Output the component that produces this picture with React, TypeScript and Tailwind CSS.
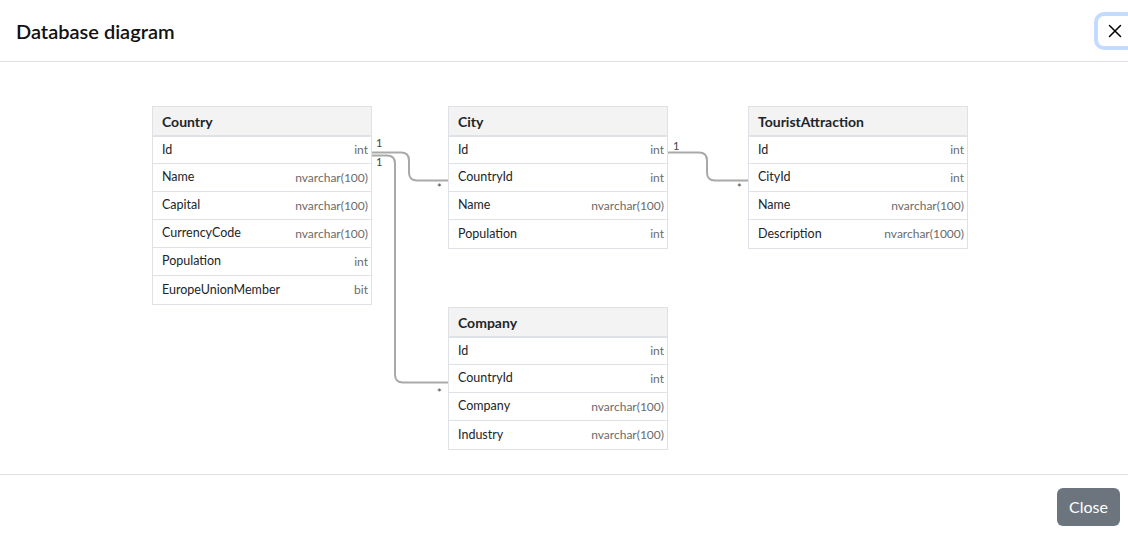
import { X } from 'lucide-react';

type Column = { name: string; type: string };
type Table = { name: string; x: number; y: number; columns: Column[] };

const tables: Table[] = [
  {
    name: 'Country',
    x: 152,
    y: 44,
    columns: [
      { name: 'Id', type: 'int' },
      { name: 'Name', type: 'nvarchar(100)' },
      { name: 'Capital', type: 'nvarchar(100)' },
      { name: 'CurrencyCode', type: 'nvarchar(100)' },
      { name: 'Population', type: 'int' },
      { name: 'EuropeUnionMember', type: 'bit' },
    ],
  },
  {
    name: 'City',
    x: 448,
    y: 44,
    columns: [
      { name: 'Id', type: 'int' },
      { name: 'CountryId', type: 'int' },
      { name: 'Name', type: 'nvarchar(100)' },
      { name: 'Population', type: 'int' },
    ],
  },
  {
    name: 'TouristAttraction',
    x: 748,
    y: 44,
    columns: [
      { name: 'Id', type: 'int' },
      { name: 'CityId', type: 'int' },
      { name: 'Name', type: 'nvarchar(100)' },
      { name: 'Description', type: 'nvarchar(1000)' },
    ],
  },
  {
    name: 'Company',
    x: 448,
    y: 245,
    columns: [
      { name: 'Id', type: 'int' },
      { name: 'CountryId', type: 'int' },
      { name: 'Company', type: 'nvarchar(100)' },
      { name: 'Industry', type: 'nvarchar(100)' },
    ],
  },
];

// relation labels, positions relative to the diagram canvas
const labels = [
  { text: '1', x: 376, y: 75 },
  { text: '1', x: 376, y: 94 },
  { text: '*', x: 437, y: 120 },
  { text: '*', x: 437, y: 325 },
  { text: '1', x: 673, y: 78 },
  { text: '*', x: 737, y: 120 },
];

function TableNode({ table }: { table: Table }) {
  return (
    <div
      className="absolute w-[220px] border border-[#dee2e6] bg-white"
      style={{ left: table.x, top: table.y }}
    >
      <div className="flex h-[30px] items-center border-b-2 border-[#dee2e6] bg-[#f3f3f3] px-[9px] text-[14px] font-bold text-[#212529]">
        {table.name}
      </div>
      <div className="divide-y divide-[#dee2e6]">
        {table.columns.map((c) => (
          <div key={c.name} className="flex h-[28px] items-center justify-between pl-[9px] pr-[3px] first:h-[27px]">
            <span className="text-[12.5px] text-[#212529]">{c.name}</span>
            <span className="text-[12px] text-[#6b6b6b]">{c.type}</span>
          </div>
        ))}
      </div>
    </div>
  );
}

export default function App() {
  return (
    <div className="h-[539px] w-[1128px] overflow-hidden bg-white font-['Lato','Liberation_Sans',sans-serif] text-[#212529]">
      <div className="flex h-full flex-col">
        <div className="flex h-[62px] shrink-0 items-center justify-between border-b border-[#dee2e6] pl-4">
          <h5 className="text-[20px] font-semibold leading-none text-[#111]">Database diagram</h5>
          <button className="mr-[-4px] flex h-[30px] w-[34px] items-center justify-center rounded-[6px] text-black ring-4 ring-[#c2dbfe]">
            <X size={22} strokeWidth={1.6} />
          </button>
        </div>

        <div className="relative flex-1">
          <svg className="absolute inset-0 h-full w-full" fill="none" stroke="#a9a9a9" strokeWidth={2}>
            <path d="M372 90.5 H401 Q409 90.5 409 98.5 V110.5 Q409 118.5 417 118.5 H448" />
            <path d="M372 93.5 H387 Q395 93.5 395 101.5 V312.5 Q395 320.5 403 320.5 H448" />
            <path d="M668 90.5 H699 Q707 90.5 707 98.5 V110.5 Q707 118.5 715 118.5 H748" />
          </svg>
          {labels.map((l, i) => (
            <span
              key={i}
              className="absolute text-[11px] leading-none text-[#444]"
              style={{ left: l.x, top: l.y }}
            >
              {l.text}
            </span>
          ))}
          {tables.map((t) => (
            <TableNode key={t.name} table={t} />
          ))}
        </div>

        <div className="flex h-[65px] shrink-0 items-center justify-end border-t border-[#dee2e6] pr-2">
          <button className="h-[38px] rounded-[6px] bg-[#6c757d] px-3 text-[16px] text-white">Close</button>
        </div>
      </div>
    </div>
  );
}
